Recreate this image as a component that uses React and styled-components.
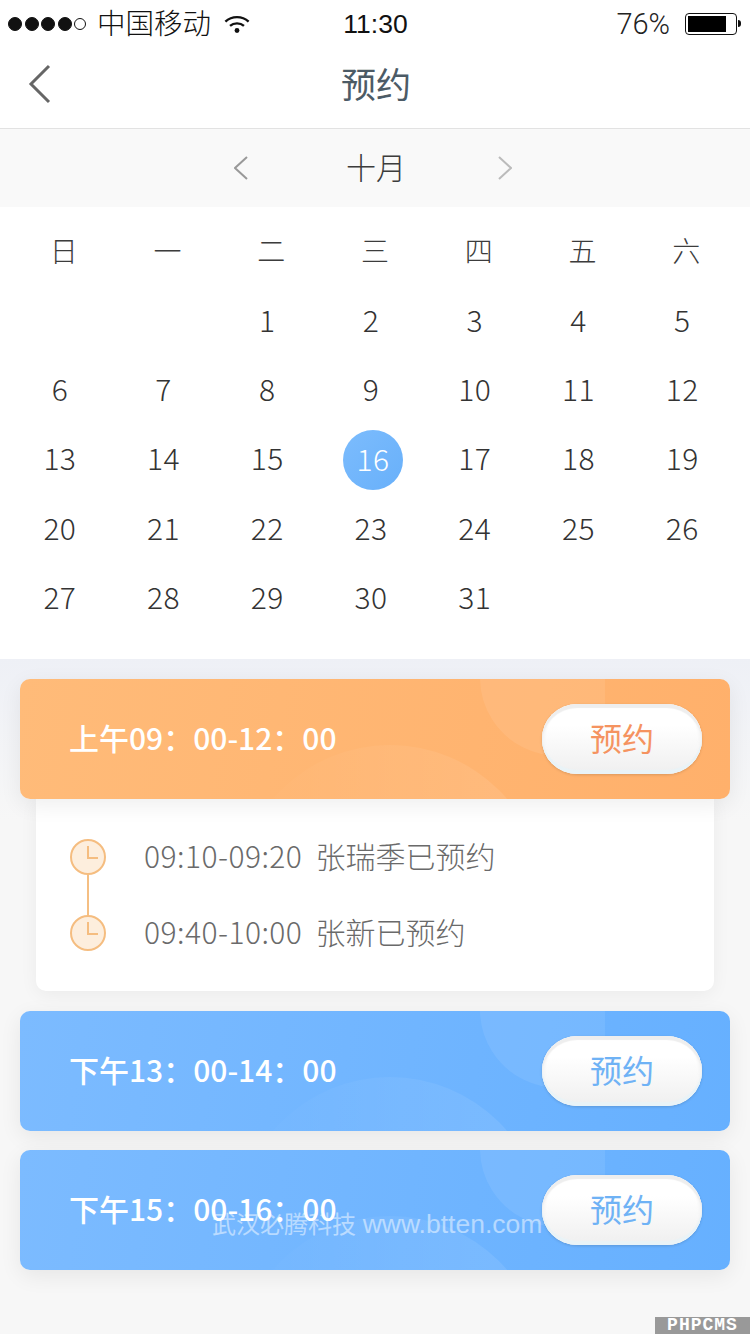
import React from "react";
import styled, { createGlobalStyle } from "styled-components";

const GlobalStyle = createGlobalStyle`
  html, body {
    margin: 0;
    padding: 0;
    background: #f7f7f7;
  }
  * {
    box-sizing: border-box;
  }
`;

const cjk = `"Noto Sans CJK SC", "Noto Sans", sans-serif`;

const Page = styled.div`
  position: relative;
  width: 750px;
  height: 1334px;
  overflow: hidden;
  font-family: ${cjk};
  background: linear-gradient(#eef0f6 659px, #f7f7f7 820px);
`;

const StatusBar = styled.div`
  height: 48px;
  display: grid;
  grid-template-columns: 1fr auto 1fr;
  align-items: center;
  background: #fff;
  color: #111;
  padding: 0 11px 2px 8px;
`;

const StatusLeft = styled.div`
  display: flex;
  align-items: center;
`;

const Signal = styled.div`
  display: flex;
  align-items: center;
  gap: 2.5px;
  margin-right: 11px;
`;

const Dot = styled.span`
  width: ${props => (props.$on ? 14 : 12)}px;
  height: ${props => (props.$on ? 14 : 12)}px;
  border-radius: 50%;
  border: 1px solid #111;
  background: ${props => (props.$on ? "#111" : "#fff")};
`;

const Carrier = styled.span`
  font-size: 28.5px;
  font-weight: 300;
  line-height: 44px;
  margin: 0 13px 4px 0;
`;

const Clock = styled.div`
  font-family: "Liberation Sans", sans-serif;
  font-size: 26.5px;
  margin-left: 4px;
`;

const StatusRight = styled.div`
  display: flex;
  justify-content: flex-end;
  align-items: center;
  gap: 15px;
`;

const Percent = styled.span`
  font-family: Roboto, "Liberation Sans", sans-serif;
  font-weight: 300;
  font-size: 29px;
  color: #222;
`;

const Battery = styled.div`
  position: relative;
  width: 52px;
  height: 22px;
  border: 1.5px solid #111;
  border-radius: 4px;
  padding: 2px;
  margin-right: 2px;

  &::before {
    content: "";
    display: block;
    width: 38px;
    height: 100%;
    background: #000;
  }
  &::after {
    content: "";
    position: absolute;
    right: -5px;
    top: 6px;
    width: 3px;
    height: 7px;
    border-radius: 0 3px 3px 0;
    background: #111;
  }
`;

const NavBar = styled.div`
  height: 81px;
  display: flex;
  align-items: center;
  justify-content: center;
  position: relative;
  background: #fff;
  border-bottom: 1px solid #e2e2e2;
`;

const BackIcon = styled.svg`
  position: absolute;
  left: 28px;
  top: 16px;
`;

const NavTitle = styled.h1`
  margin: 0 0 11px 2px;
  font-size: 35px;
  font-weight: 400;
  color: #4c5b66;
`;

const MonthBar = styled.div`
  height: 78px;
  display: flex;
  align-items: center;
  justify-content: center;
  padding-right: 4px;
  background: #f9f9f9;
`;

const MonthName = styled.span`
  margin: 0 92px 4px 98px;
  font-size: 30px;
  font-weight: 300;
  color: #3c3c3c;
`;

const Calendar = styled.div`
  background: #fff;
  height: 452px;
  padding: 8px 12px 0;
`;

const WeekRow = styled.div`
  display: grid;
  grid-template-columns: repeat(7, 1fr);
  height: 69.5px;
  align-items: center;
  text-align: center;
  font-size: 28px;
  font-weight: 300;
  color: #3c3c3c;
`;

const DayGrid = styled.div`
  display: grid;
  grid-template-columns: repeat(7, 1fr);
  grid-auto-rows: 69.2px;
  margin-left: -4px;
  margin-right: 4px;
`;

const Day = styled.div`
  display: flex;
  align-items: center;
  justify-content: center;
  font-size: 30px;
  font-weight: 300;
  letter-spacing: 0.4px;
  color: #333;
`;

const Selected = styled.span`
  width: 60px;
  height: 60px;
  margin: 5px 0 0 4px;
  padding-bottom: 3px;
  border-radius: 50%;
  display: flex;
  align-items: center;
  justify-content: center;
  color: #fff;
  background: linear-gradient(135deg, #7cbcfd, #68b0fa);
`;

const Slots = styled.div`
  padding: 20px 20px 0;
  display: flex;
  flex-direction: column;
`;

const Card = styled.div`
  position: relative;
  height: 120px;
  border-radius: 10px;
  overflow: hidden;
  display: flex;
  align-items: center;
  justify-content: space-between;
  padding: 0 28px 0 49px;
  color: #fff;
  background: ${props =>
    props.$tone === "orange"
      ? "linear-gradient(100deg, #ffbb79, #ffb06b)"
      : "linear-gradient(100deg, #7cbbff, #66b0ff)"};
`;

const CardShadow = styled.div`
  position: relative;
  z-index: 1;
  border-radius: 10px;
  margin-bottom: ${props => props.$gap || 0}px;
  box-shadow: 0 6px 22px rgba(0, 0, 0, 0.07);
`;

const Decor = styled.svg`
  position: absolute;
  left: 0;
  top: 0;
`;

const SlotTime = styled.span`
  position: relative;
  margin-bottom: 4px;
  font-size: 30px;
  font-weight: 500;
`;

const BookButton = styled.button`
  position: relative;
  width: 160px;
  height: 70px;
  padding: 0 0 4px;
  border: none;
  border-radius: 35px;
  font-family: ${cjk};
  font-size: 32px;
  color: ${props => (props.$tone === "orange" ? "#f59360" : "#6fb2f5")};
  background: linear-gradient(#fff 30%, #efefef);
  box-shadow: inset 0 4px 1px #eeeeee, inset 0 -4px 1px #e9f3f7, inset 3px 0 2px #f6f6f6,
    inset -3px 0 2px #f6f6f6, 0 1px 3px rgba(0, 0, 0, 0.15);
`;

const Detail = styled.div`
  margin: 0 16px 20px;
  height: 192px;
  padding: 20px 0 0 34px;
  background: #fff;
  border-radius: 0 0 10px 10px;
  box-shadow: 0 4px 18px rgba(0, 0, 0, 0.05);
`;

const DetailRow = styled.div`
  height: 76px;
  display: flex;
  align-items: center;
  gap: 38px;
  font-size: 30px;
  font-weight: 300;
  color: #6a6a6a;
`;

const DetailText = styled.div`
  margin-bottom: 4px;
  white-space: pre;
`;

const DetailTime = styled.span`
  letter-spacing: 0.45px;
`;

const TimeDot = styled.div`
  position: relative;
  width: 36px;
  height: 36px;

  &::after {
    content: "";
    display: ${props => (props.$last ? "none" : "block")};
    position: absolute;
    left: 17px;
    top: 36px;
    width: 2px;
    height: 40px;
    background: #f5bf83;
  }
`;

const Watermark = styled.div`
  position: absolute;
  z-index: 2;
  left: 212px;
  top: 1209px;
  font-family: "Liberation Sans", ${cjk};
  font-size: 24px;
  line-height: 30px;
  white-space: nowrap;
  color: rgba(255, 255, 255, 0.5);
`;

const WatermarkUrl = styled.span`
  font-size: 26.5px;
`;

const Badge = styled.div`
  position: absolute;
  right: 0;
  bottom: 0;
  width: 95px;
  height: 17px;
  background: #999;
  color: #fff;
  font-family: "Liberation Mono", monospace;
  font-weight: 700;
  font-size: 18px;
  line-height: 17px;
  letter-spacing: 1px;
  text-align: center;
`;

const weeks = ["日", "一", "二", "三", "四", "五", "六"];
const days = [null, null, ...Array.from({ length: 31 }, (_, i) => i + 1)];

const Chevron = ({ dir, color, width = 2, w = 14, h = 24 }) => (
  <svg width={w} height={h} viewBox={`0 0 ${w} ${h}`} fill="none">
    <path
      d={dir === "left" ? `M${w - 1} 1L1 ${h / 2}L${w - 1} ${h - 1}` : `M1 1L${w - 1} ${h / 2}L1 ${h - 1}`}
      stroke={color}
      strokeWidth={width}
    />
  </svg>
);

const ClockIcon = () => (
  <svg width="36" height="36" viewBox="0 0 36 36" fill="none">
    <circle cx="18" cy="18" r="17" fill="#fdeedd" stroke="#f5bd80" strokeWidth="2" />
    <path d="M18 7V19H28" stroke="#f5bd80" strokeWidth="2" />
  </svg>
);

const CardDecor = ({ id }) => (
  <Decor width="710" height="120" viewBox="0 0 710 120">
    <defs>
      <linearGradient id={id} x1="0" x2="1" y1="0" y2="0">
        <stop offset="0" stopColor="#fff" stopOpacity="0" />
        <stop offset="1" stopColor="#fff" stopOpacity="0.1" />
      </linearGradient>
    </defs>
    <circle cx="370" cy="220" r="154" fill={`url(#${id})`} />
    <path d="M460 0A78 78 0 0 0 585 61V0Z" fill="#fff" fillOpacity="0.08" />
  </Decor>
);

const Slot = ({ tone, time, id, gap }) => (
  <CardShadow $gap={gap}>
    <Card $tone={tone}>
      <CardDecor id={id} />
      <SlotTime>{time}</SlotTime>
      <BookButton $tone={tone}>预约</BookButton>
    </Card>
  </CardShadow>
);

const App = () => {
  return (
    <Page>
      <GlobalStyle />
      <StatusBar>
        <StatusLeft>
          <Signal>
            <Dot $on />
            <Dot $on />
            <Dot $on />
            <Dot $on />
            <Dot />
          </Signal>
          <Carrier>中国移动</Carrier>
          <svg width="26" height="20" viewBox="0 0 28 20" fill="none">
            <path d="M1.5 7.5C8.5 1 19.5 1 26.5 7.5" stroke="#111" strokeWidth="2.6" />
            <path d="M6.5 12C10.5 8.4 17.5 8.4 21.5 12" stroke="#111" strokeWidth="2.6" />
            <circle cx="14" cy="17" r="2.6" fill="#111" />
          </svg>
        </StatusLeft>
        <Clock>11:30</Clock>
        <StatusRight>
          <Percent>76%</Percent>
          <Battery />
        </StatusRight>
      </StatusBar>
      <NavBar>
        <BackIcon width="24" height="40" viewBox="0 0 24 40" fill="none">
          <path d="M21 2L3 20L21 38" stroke="#666" strokeWidth="3" />
        </BackIcon>
        <NavTitle>预约</NavTitle>
      </NavBar>
      <MonthBar>
        <Chevron dir="left" color="#999" />
        <MonthName>十月</MonthName>
        <Chevron dir="right" color="#bbb" />
      </MonthBar>
      <Calendar>
        <WeekRow>
          {weeks.map(w => (
            <span key={w}>{w}</span>
          ))}
        </WeekRow>
        <DayGrid>
          {days.map((d, i) => (
            <Day key={i}>{d === 16 ? <Selected>{d}</Selected> : d}</Day>
          ))}
        </DayGrid>
      </Calendar>
      <Slots>
        <Slot tone="orange" id="decor-a" time="上午09：00-12：00" />
        <Detail>
          <DetailRow>
            <TimeDot>
              <ClockIcon />
            </TimeDot>
            <DetailText>
              <DetailTime>09:10-09:20</DetailTime>  张瑞季已预约
            </DetailText>
          </DetailRow>
          <DetailRow>
            <TimeDot $last>
              <ClockIcon />
            </TimeDot>
            <DetailText>
              <DetailTime>09:40-10:00</DetailTime>  张新已预约
            </DetailText>
          </DetailRow>
        </Detail>
        <Slot tone="blue" id="decor-b" gap={19} time="下午13：00-14：00" />
        <Slot tone="blue" id="decor-c" time="下午15：00-16：00" />
      </Slots>
      <Watermark>
        武汉必腾科技 <WatermarkUrl>www.btten.com</WatermarkUrl>
      </Watermark>
      <Badge>PHPCMS</Badge>
    </Page>
  );
};

export default App;
